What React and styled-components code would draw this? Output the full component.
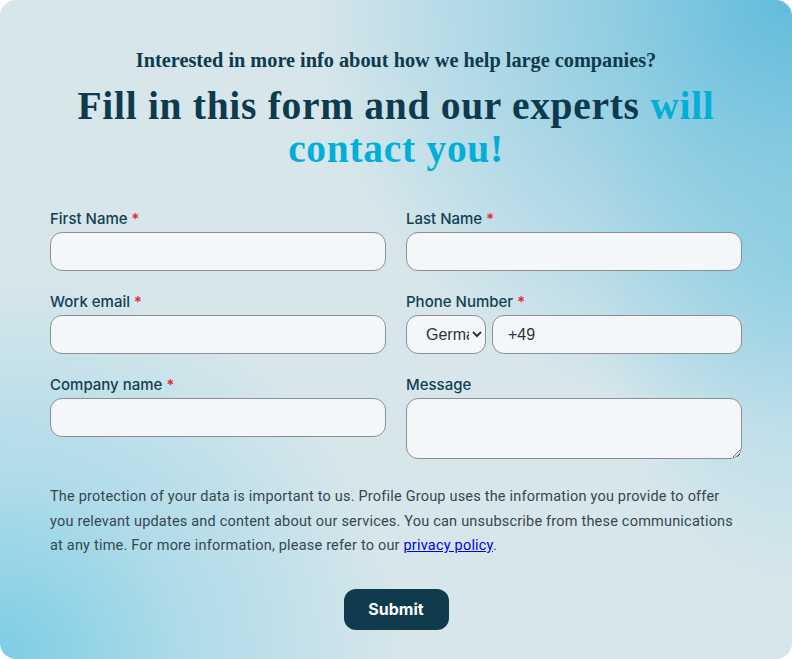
import React from "react";
import styled, { createGlobalStyle } from "styled-components";

const Global = createGlobalStyle`
  html, body { margin: 0; padding: 0; background: #ffffff; }
  * { box-sizing: border-box; }
`;

const Card = styled.section`
  width: 792px;
  min-height: 659px;
  border-radius: 16px;
  overflow: hidden;
  padding: 47px 50px 28px;
  background:
    radial-gradient(ellipse 480px 430px at 100% 0%, rgba(92, 186, 218, 0.95) 0%, rgba(112, 194, 222, 0.65) 40%, rgba(200, 228, 236, 0) 100%),
    radial-gradient(ellipse 400px 380px at 0% 100%, rgba(118, 204, 229, 0.95) 0%, rgba(140, 210, 230, 0.55) 45%, rgba(200, 228, 236, 0) 100%),
    radial-gradient(ellipse 200px 320px at 100% 40%, rgba(130, 205, 228, 0.55) 0%, rgba(200, 228, 236, 0) 100%),
    #d6e6eb;
  font-family: Inter, "Noto Sans", sans-serif;
`;

const Eyebrow = styled.p`
  margin: 0;
  text-align: center;
  font-family: "Liberation Serif", serif;
  font-weight: 700;
  font-size: 20.3px;
  line-height: 26px;
  color: #0e3a4d;
`;

const Title = styled.h1`
  margin: 12px 0 0;
  text-align: center;
  font-family: "Liberation Serif", serif;
  font-weight: 700;
  font-size: 39.5px;
  letter-spacing: 0.7px;
  line-height: 43px;
  color: #0e3a4d;
`;

const Accent = styled.span`
  color: #00afd8;
`;

const Grid = styled.div`
  margin-top: 38px;
  display: grid;
  grid-template-columns: 1fr 1fr;
  column-gap: 20px;
  row-gap: 21px;
`;

const Field = styled.label`
  display: flex;
  flex-direction: column;
  gap: 4px;
`;

const LabelText = styled.span`
  font-size: 15px;
  line-height: 19px;
  font-weight: 500;
  color: #123f52;
`;

const Req = styled.span`
  color: #e5202e;
  margin-left: 4px;
`;

const inputBase = `
  width: 100%;
  border: 1px solid #8c8f91;
  border-radius: 12px;
  background: #f3f7fa;
  font-family: "Liberation Sans", Arial, sans-serif;
  font-size: 16px;
  color: #333;
  outline: none;
`;

const Input = styled.input`
  ${inputBase}
  height: 39px;
  padding: 0 15px;
`;

const Area = styled.textarea`
  ${inputBase}
  height: 61px;
  padding: 10px 15px;
  resize: vertical;
  display: block;
`;

const PhoneRow = styled.div`
  display: flex;
  gap: 6px;
`;

const Select = styled.select`
  ${inputBase}
  width: 80px;
  flex: none;
  height: 39px;
  padding: 0 0 0 15px;
`;

const Notice = styled.p`
  margin: 26px 0 0;
  font-family: Roboto, "Noto Sans", sans-serif;
  font-size: 14.5px;
  letter-spacing: 0.2px;
  line-height: 24.5px;
  color: #36474f;
`;

const Link = styled.a`
  color: #0000ee;
  text-decoration: underline;
`;

const Actions = styled.div`
  display: flex;
  justify-content: center;
  margin-top: 30px;
`;

const Submit = styled.button`
  width: 105px;
  height: 41px;
  border: none;
  border-radius: 12px;
  background: #0f3b4c;
  color: #ffffff;
  font-family: Inter, Roboto, sans-serif;
  font-weight: 700;
  font-size: 16px;
  cursor: pointer;
`;

function Label({ text, required }) {
  return (
    <LabelText>
      {text}
      {required && <Req>*</Req>}
    </LabelText>
  );
}

export default function App() {
  return (
    <>
      <Global />
      <Card>
        <Eyebrow>Interested in more info about how we help large companies?</Eyebrow>
        <Title>
          Fill in this form and our experts <Accent>will contact you!</Accent>
        </Title>
        <Grid>
          <Field>
            <Label text="First Name" required />
            <Input type="text" />
          </Field>
          <Field>
            <Label text="Last Name" required />
            <Input type="text" />
          </Field>
          <Field>
            <Label text="Work email" required />
            <Input type="email" />
          </Field>
          <Field as="div">
            <Label text="Phone Number" required />
            <PhoneRow>
              <Select defaultValue="de">
                <option value="de">Germany</option>
              </Select>
              <Input type="tel" defaultValue="+49" />
            </PhoneRow>
          </Field>
          <Field>
            <Label text="Company name" required />
            <Input type="text" />
          </Field>
          <Field>
            <Label text="Message" />
            <Area />
          </Field>
        </Grid>
        <Notice>
          The protection of your data is important to us. Profile Group uses the information you provide to offer
          you relevant updates and content about our services. You can unsubscribe from these communications
          at any time. For more information, please refer to our <Link href="#">privacy policy</Link>.
        </Notice>
        <Actions>
          <Submit type="button">Submit</Submit>
        </Actions>
      </Card>
    </>
  );
}
